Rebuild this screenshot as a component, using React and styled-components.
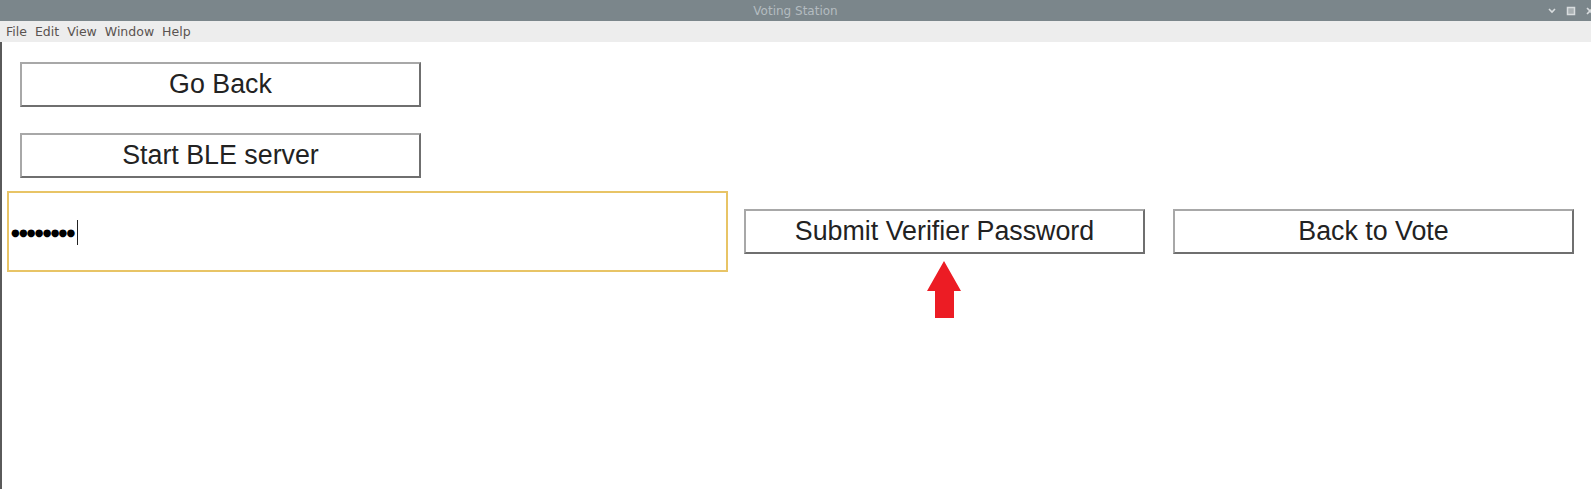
import React from "react";
import styled, { createGlobalStyle } from "styled-components";

const Global = createGlobalStyle`
  html, body { margin: 0; padding: 0; background: #fff; }
  body { font-family: "Liberation Sans", Arial, sans-serif; }
`;

const Window = styled.div`
  width: 1591px;
  height: 489px;
  display: flex;
  flex-direction: column;
  overflow: hidden;
  position: relative;
`;

const TitleBar = styled.div`
  height: 21px;
  background: #7b868b;
  display: flex;
  align-items: center;
  justify-content: center;
  position: relative;
  color: #b4bcc0;
  font-family: "DejaVu Sans", sans-serif;
  font-size: 12px;
`;

const Controls = styled.div`
  position: absolute;
  right: -4px;
  top: 0;
  height: 21px;
  display: flex;
  align-items: center;
  gap: 9px;
`;

const MenuBar = styled.div`
  height: 21px;
  background: #ededed;
  display: flex;
  align-items: center;
  gap: 8px;
  padding-left: 6px;
  font-family: "DejaVu Sans", sans-serif;
  font-size: 12.5px;
  color: #5a5350;
`;

const Body = styled.div`
  flex: 1;
  border-left: 2px solid #5a5a5a;
  padding: 20px 0 0 5px;
  display: flex;
  flex-direction: column;
  position: relative;
`;

const Column = styled.div`
  display: flex;
  flex-direction: column;
  gap: 26px;
  margin-left: 13px;
`;

const Button = styled.div`
  box-sizing: border-box;
  width: 401px;
  height: 45px;
  border: 2px solid;
  border-color: #a8a8a8 #6f6f6f #6f6f6f #a8a8a8;
  background: #fff;
  display: flex;
  align-items: center;
  justify-content: center;
  font-size: 26.8px;
  color: #222;
`;

const Row = styled.div`
  display: flex;
  align-items: center;
  margin-top: 13px;
`;

const Field = styled.div`
  box-sizing: border-box;
  width: 721px;
  height: 81px;
  border: 2px solid #e8c466;
  display: flex;
  align-items: center;
  padding-left: 2px;
  padding-top: 2px;
`;

const Dots = styled.span`
  font-family: "DejaVu Sans", sans-serif;
  font-size: 10px;
  letter-spacing: -0.8px;
  color: #000;
  line-height: 1;
`;

const Caret = styled.span`
  display: inline-block;
  width: 1px;
  height: 25px;
  background: #222;
  margin-left: 3px;
`;

const RowButton = styled(Button)`
  margin-left: ${(p) => p.$gap}px;
`;

const Arrow = styled.svg`
  position: absolute;
  left: 924px;
  top: 219px;
`;

export default function App() {
  return (
    <>
      <Global />
      <Window>
        <TitleBar>
          Voting Station
          <Controls>
            <svg width="10" height="8" viewBox="0 0 10 8">
              <path d="M2 2 L5 5 L8 2" stroke="#d8dcde" strokeWidth="1.6" fill="none" />
            </svg>
            <svg width="10" height="10" viewBox="0 0 10 10">
              <rect x="1.5" y="1.5" width="7" height="7" stroke="#d8dcde" strokeWidth="1.5" fill="#a9b0b3" />
            </svg>
            <svg width="10" height="10" viewBox="0 0 10 10">
              <path d="M2 2 L8 8 M8 2 L2 8" stroke="#d8dcde" strokeWidth="1.6" />
            </svg>
          </Controls>
        </TitleBar>
        <MenuBar>
          <span>File</span>
          <span>Edit</span>
          <span>View</span>
          <span>Window</span>
          <span>Help</span>
        </MenuBar>
        <Body>
          <Column>
            <Button>Go Back</Button>
            <Button>Start BLE server</Button>
          </Column>
          <Row>
            <Field>
              <Dots>●●●●●●●●</Dots>
              <Caret />
            </Field>
            <RowButton $gap={16}>Submit Verifier Password</RowButton>
            <RowButton $gap={28}>Back to Vote</RowButton>
          </Row>
          <Arrow width="36" height="58" viewBox="0 0 36 58">
            <polygon points="18,0 35,30 28,30 28,57 9,57 9,30 1,30" fill="#ec1c24" />
          </Arrow>
        </Body>
      </Window>
    </>
  );
}
